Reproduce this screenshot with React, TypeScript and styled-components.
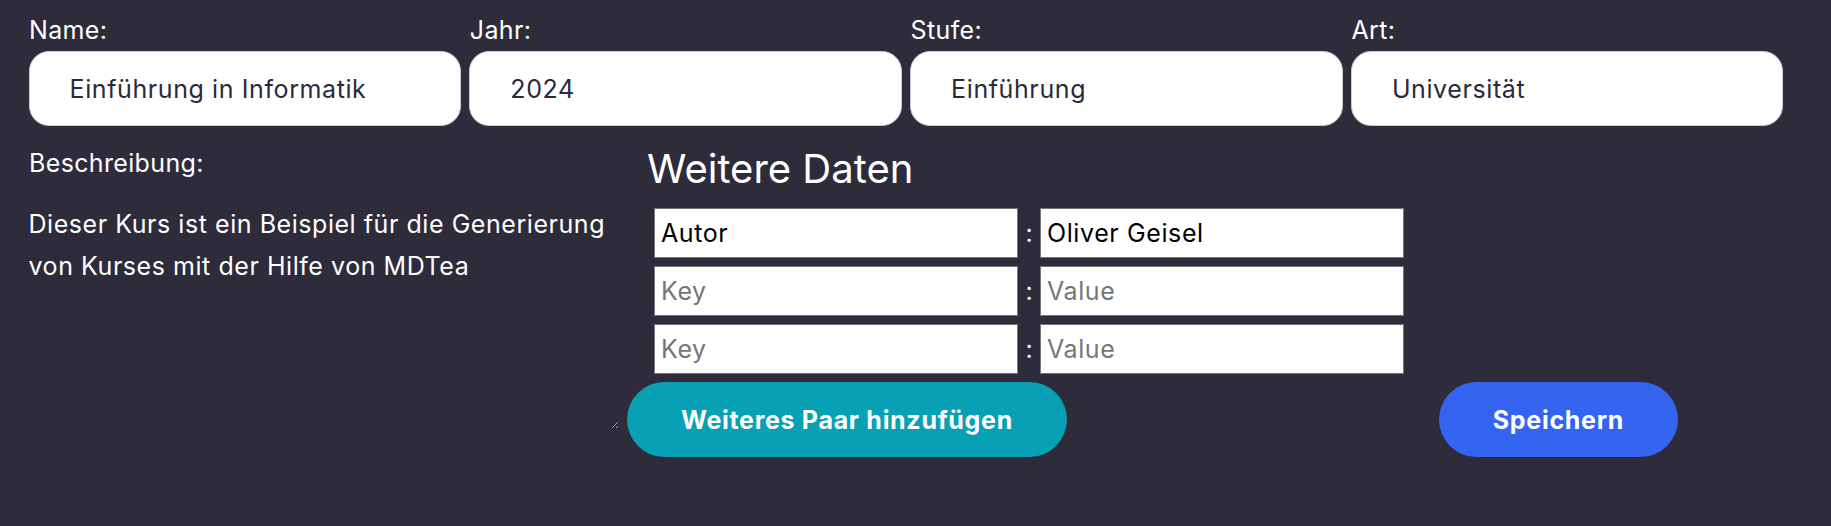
import React from "react";
import styled, { createGlobalStyle } from "styled-components";

const GlobalStyle = createGlobalStyle`
  html, body {
    margin: 0;
    padding: 0;
    background: #2e2c3a;
  }
  body {
    font-family: Inter, "Noto Sans", sans-serif;
    color: #ffffff;
  }
  * { box-sizing: border-box; }
`;

const Page = styled.div`
  min-height: 526px;
  padding: 15px 0 0 28.5px;
  background: #2e2c3a;
`;

const TopGrid = styled.div`
  display: grid;
  grid-template-columns: repeat(4, 432.5px);
  column-gap: 8.3px;
`;

const Field = styled.div`
  display: flex;
  flex-direction: column;
`;

const Label = styled.label`
  font-size: 25px;
  line-height: 30px;
  letter-spacing: 0.35px;
  color: #ffffff;
  margin-bottom: 6px;
  padding-left: 0.5px;
`;

const TextInput = styled.input`
  height: 75px;
  width: 100%;
  border: 1px solid #c9c9cf;
  border-radius: 20px;
  padding: 0 0 0 40px;
  font-family: Inter, sans-serif;
  font-size: 25px;
  letter-spacing: 0.6px;
  color: #2b2a3a;
  background: #ffffff;
  outline: none;
`;

const Lower = styled.div`
  display: flex;
  align-items: flex-start;
`;

const LeftCol = styled.div`
  width: 592px;
  padding-top: 22px;
  display: flex;
  flex-direction: column;
`;

const Description = styled.textarea`
  margin-top: 19px;
  width: 590px;
  height: 226px;
  padding: 0;
  border: none;
  outline: none;
  background: transparent;
  color: #ffffff;
  font-family: Inter, sans-serif;
  font-size: 25px;
  letter-spacing: 0.55px;
  line-height: 42px;
  resize: both;
  overflow: hidden;
`;

const RightCol = styled.div`
  margin-left: 6.5px;
  padding-top: 19px;
  display: flex;
  flex-direction: column;
`;

const Title = styled.h2`
  margin: 0;
  padding-left: 20px;
  font-size: 40px;
  font-weight: 400;
  line-height: 48px;
  color: #ffffff;
`;

const PairList = styled.div`
  margin-top: 15px;
  padding-left: 27px;
  display: flex;
  flex-direction: column;
  gap: 8px;
`;

const PairRow = styled.div`
  display: flex;
  align-items: center;
`;

const PairInput = styled.input`
  width: 364px;
  height: 50px;
  border: 1px solid #767676;
  border-radius: 0;
  padding: 0 6px;
  background: #ffffff;
  color: #000000;
  font-family: Inter, sans-serif;
  font-size: 25px;
  letter-spacing: 0.6px;
  outline: none;
  &::placeholder {
    color: #767676;
  }
`;

const Colon = styled.span`
  width: 22px;
  text-align: center;
  font-size: 25px;
  color: #ffffff;
`;

const ButtonRow = styled.div`
  margin-top: 8px;
  width: 1051px;
  display: flex;
  justify-content: space-between;
`;

const Button = styled.button<{ $tone: "teal" | "blue" }>`
  height: 75px;
  padding: 0 54px;
  border: none;
  border-radius: 38px;
  background: ${(p) => (p.$tone === "teal" ? "#08a0b4" : "#3564f1")};
  color: #ffffff;
  font-family: Inter, sans-serif;
  font-size: 25px;
  font-weight: 700;
  letter-spacing: 0.7px;
  cursor: pointer;
`;

const topFields = [
  { label: "Name:", value: "Einführung in Informatik" },
  { label: "Jahr:", value: "2024" },
  { label: "Stufe:", value: "Einführung" },
  { label: "Art:", value: "Universität" },
];

const pairs = [
  { key: "Autor", value: "Oliver Geisel" },
  { key: "", value: "" },
  { key: "", value: "" },
];

export default function App() {
  return (
    <>
      <GlobalStyle />
      <Page>
        <TopGrid>
          {topFields.map((f) => (
            <Field key={f.label}>
              <Label>{f.label}</Label>
              <TextInput defaultValue={f.value} />
            </Field>
          ))}
        </TopGrid>
        <Lower>
          <LeftCol>
            <Label>Beschreibung:</Label>
            <Description defaultValue="Dieser Kurs ist ein Beispiel für die Generierung von Kurses mit der Hilfe von MDTea" />
          </LeftCol>
          <RightCol>
            <Title>Weitere Daten</Title>
            <PairList>
              {pairs.map((p, i) => (
                <PairRow key={i}>
                  <PairInput defaultValue={p.key} placeholder="Key" />
                  <Colon>:</Colon>
                  <PairInput defaultValue={p.value} placeholder="Value" />
                </PairRow>
              ))}
            </PairList>
            <ButtonRow>
              <Button $tone="teal">Weiteres Paar hinzufügen</Button>
              <Button $tone="blue">Speichern</Button>
            </ButtonRow>
          </RightCol>
        </Lower>
      </Page>
    </>
  );
}
